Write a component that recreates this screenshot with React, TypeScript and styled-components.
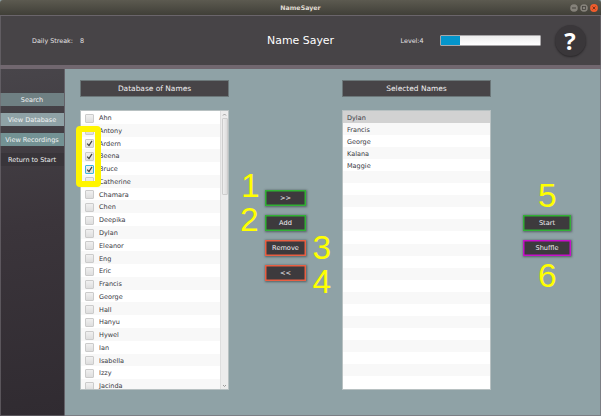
import React from "react";
import styled, { createGlobalStyle, css } from "styled-components";

const Global = createGlobalStyle`
  * { box-sizing: border-box; }
  html, body { margin: 0; padding: 0; overflow: hidden; }
  body { font-family: "DejaVu Sans", Verdana, sans-serif; font-size: 6.5px; background: #8fa2a5; }
`;

const Window = styled.div`
  position: relative;
  width: 601px;
  height: 416px;
  display: flex;
  flex-direction: column;
  background: #8fa2a6;
  overflow: hidden;
`;

const Frame = styled.div`
  position: absolute;
  inset: 15px 0 0 0;
  border: 1px solid rgba(112, 108, 114, 0.65);
  pointer-events: none;
`;

const TitleBar = styled.div`
  flex: none;
  height: 15px;
  display: grid;
  grid-template-columns: 1fr auto 1fr;
  align-items: center;
  background: linear-gradient(#5c5a50, #403f38);
  border-radius: 3px 3px 0 0;
  color: #e0dcd2;
  font-size: 6.3px;
  font-weight: bold;
`;

const WindowControls = styled.div`
  grid-column: 3;
  display: flex;
  justify-content: flex-end;
  gap: 2px;
  padding-right: 3px;
`;

const Header = styled.header`
  flex: none;
  height: 54px;
  display: grid;
  grid-template-columns: 32px 48px 187px 133.5px 39.5px 101px 13.5px 1fr;
  align-items: center;
  border-top: 1px solid #5f5b60;
  border-bottom: 4px solid #71676f;
  background: #474447;
  color: #e4e2e4;
  font-size: 6.4px;
  white-space: nowrap;
`;

const AppName = styled.h1`
  margin: 0;
  font-size: 10.95px;
  font-weight: normal;
  color: #fff;
`;

const Progress = styled.div`
  height: 11px;
  border: 1px solid #a8a6a8;
  border-radius: 1px;
  background: linear-gradient(#ececec, #fff);
`;

const ProgressFill = styled.div`
  width: 19px;
  height: 100%;
  background: #0495cb;
`;

const HelpButton = styled.button`
  width: 31px;
  height: 31px;
  padding: 0;
  border: 0;
  border-radius: 50%;
  background: #3a373a;
  box-shadow: 0 1px 2px rgba(20, 18, 20, 0.6);
  color: #fff;
  font: bold 24px/31px "Open Sans", "Noto Sans", sans-serif;
`;

const Body = styled.div`
  flex: 1;
  display: flex;
  min-height: 0;
`;

const Sidebar = styled.nav`
  width: 65px;
  flex: none;
  display: flex;
  flex-direction: column;
  gap: 7px;
  padding-top: 24px;
  border-right: 1px solid #646168;
  background: linear-gradient(172deg, #48454a, #3b353b 45%, #302b31);
`;

const NavItem = styled.div<{ $bg: string }>`
  height: 13px;
  background: ${(p) => p.$bg};
  color: #f1f3f3;
  text-align: center;
  line-height: 14px;
  white-space: nowrap;
`;

const Main = styled.main`
  flex: 1;
  display: grid;
  grid-template-columns: 149px 113px 149px 112px;
  padding: 11px 0 0 15px;
`;

const Column = styled.section`
  display: flex;
  flex-direction: column;
  gap: 13px;
`;

const ColumnTitle = styled.h2`
  flex: none;
  height: 17px;
  margin: 0;
  border: 1px solid #6c7779;
  background: #474447;
  color: #f2f0f2;
  font-size: 7.45px;
  font-weight: normal;
  line-height: 16px;
  text-align: center;
`;

const List = styled.div`
  height: 280px;
  display: flex;
  border: 1px solid #b8c1c2;
  background: #fff;
`;

const Rows = styled.div`
  flex: 1;
  overflow: hidden;
`;

const Row = styled.div<{ $height: number; $selected?: boolean }>`
  height: ${(p) => p.$height}px;
  display: flex;
  align-items: center;
  gap: 5px;
  padding: 1.5px 0 0 4px;
  color: #38383f;
  &:nth-child(even) { background: #f8f8f8; }
  ${(p) => p.$selected && css`background: #d2d2d2;`}
`;

const Check = styled.span<{ $focus?: boolean }>`
  width: 9px;
  height: 9px;
  flex: none;
  display: flex;
  border: 1px solid ${(p) => (p.$focus ? "#43b5dc" : "#cbcbcb")};
  border-radius: 1px;
  background: linear-gradient(#f0f0f0, #dedede);
  svg { width: 7px; height: 7px; }
`;

const ScrollBar = styled.div`
  width: 8px;
  display: flex;
  flex-direction: column;
  align-items: center;
  justify-content: space-between;
  background: #ececec;
  border-left: 1px solid #dedede;
`;

const Thumb = styled.div`
  width: 6px;
  height: 77px;
  margin-bottom: auto;
  border: 1px solid #cdcdcd;
  border-radius: 1px;
  background: linear-gradient(90deg, #eee, #dcdcdc);
`;

const Arrow = styled.svg`
  width: 5px;
  height: 7px;
  flex: none;
`;

const Actions = styled.div<{ $top: number }>`
  display: flex;
  flex-direction: column;
  align-items: center;
  gap: 9px;
  padding-top: ${(p) => p.$top}px;
`;

const ActionButton = styled.button<{ $color: string; $width: number }>`
  width: ${(p) => p.$width}px;
  height: 16px;
  padding: 0;
  border: 0;
  background: #3d3a3d;
  box-shadow: inset 0 0 0 1.5px ${(p) => p.$color}, 0 0 2px 0.5px rgba(45, 55, 55, 0.6);
  color: #f3f1f3;
  font: 6.6px/16px "DejaVu Sans", sans-serif;
`;

const Marker = styled.span<{ $x: number; $y: number }>`
  position: absolute;
  left: ${(p) => p.$x}px;
  top: ${(p) => p.$y}px;
  color: #ffff00;
  font: 33.5px/34px "Liberation Sans", Arial, sans-serif;
`;

const Highlight = styled.div`
  position: absolute;
  left: 76px;
  top: 126px;
  width: 25px;
  height: 61px;
  border: 6px solid #fff500;
  border-radius: 4px;
`;

const names = [
  "Ahn", "Antony", "Ardern", "Beena", "Bruce", "Catherine", "Chamara", "Chen",
  "Deepika", "Dylan", "Eleanor", "Eng", "Eric", "Francis", "George", "Hall",
  "Hanyu", "Hywel", "Ian", "Isabella", "Izzy", "Jacinda",
];
const checked = ["Ardern", "Beena", "Bruce"];
const selected = ["Dylan", "Francis", "George", "Kalana", "Maggie"];
const selectedRows = Array.from({ length: 23 }, (_, i) => selected[i] ?? "");

const markers = [
  { text: "1", x: 241, y: 169 },
  { text: "2", x: 240, y: 203 },
  { text: "3", x: 312.5, y: 231 },
  { text: "4", x: 312.5, y: 265 },
  { text: "5", x: 538, y: 179 },
  { text: "6", x: 538, y: 259 },
];

const GREEN = "#31b135";
const RED = "#e85f43";
const PURPLE = "#c70fc9";

export default function App() {
  return (
    <>
      <Global />
      <Window>
        <TitleBar>
          <span />
          <span>NameSayer</span>
          <WindowControls>
            <svg width="28" height="8" viewBox="0 0 28 8">
              <circle cx="4" cy="4" r="3.8" fill="#85827a" />
              <path d="M2 4h4" stroke="#45433d" />
              <circle cx="14" cy="4" r="3.8" fill="#85827a" />
              <rect x="12.5" y="2.5" width="3" height="3" fill="none" stroke="#45433d" strokeWidth=".8" />
              <circle cx="24" cy="4" r="3.9" fill="#f15c2c" />
              <path d="m22.6 2.6 2.8 2.8m0-2.8-2.8 2.8" stroke="#6d2d17" strokeWidth=".9" />
            </svg>
          </WindowControls>
        </TitleBar>
        <Header>
          <span />
          <span>Daily Streak:</span>
          <span>8</span>
          <AppName>Name Sayer</AppName>
          <span>Level:4</span>
          <Progress><ProgressFill /></Progress>
          <span />
          <HelpButton>?</HelpButton>
        </Header>
        <Body>
          <Sidebar>
            <NavItem $bg="#6f8083">Search</NavItem>
            <NavItem $bg="#8fa2a6">View Database</NavItem>
            <NavItem $bg="#739294">View Recordings</NavItem>
            <NavItem $bg="#39353a">Return to Start</NavItem>
          </Sidebar>
          <Main>
            <Column>
              <ColumnTitle>Database of Names</ColumnTitle>
              <List>
                <Rows>
                  {names.map((name) => (
                    <Row key={name} $height={12.78}>
                      <Check $focus={name === "Bruce"}>
                        {checked.includes(name) && (
                          <svg viewBox="0 0 7 7">
                            <path d="M1.2 3.7 3 5.6 6 .9" fill="none" stroke="#3f3f3f" strokeWidth="1.2" />
                          </svg>
                        )}
                      </Check>
                      {name}
                    </Row>
                  ))}
                </Rows>
                <ScrollBar>
                  <Arrow viewBox="0 0 5 7"><path d="m1 4.5 1.5-1.5L4 4.5" fill="none" stroke="#999" /></Arrow>
                  <Thumb />
                  <Arrow viewBox="0 0 5 7"><path d="m1 3 1.5 1.5L4 3" fill="none" stroke="#999" /></Arrow>
                </ScrollBar>
              </List>
            </Column>
            <Actions $top={110}>
              <ActionButton $width={41} $color={GREEN}>&gt;&gt;</ActionButton>
              <ActionButton $width={41} $color={GREEN}>Add</ActionButton>
              <ActionButton $width={41} $color={RED}>Remove</ActionButton>
              <ActionButton $width={41} $color={RED}>&lt;&lt;</ActionButton>
            </Actions>
            <Column>
              <ColumnTitle>Selected Names</ColumnTitle>
              <List>
                <Rows>
                  {selectedRows.map((name, i) => (
                    <Row key={i} $height={12.06} $selected={i === 0}>{name}</Row>
                  ))}
                </Rows>
              </List>
            </Column>
            <Actions $top={135}>
              <ActionButton $width={48} $color={GREEN}>Start</ActionButton>
              <ActionButton $width={48} $color={PURPLE}>Shuffle</ActionButton>
            </Actions>
          </Main>
        </Body>
        <Frame />
        <Highlight />
        {markers.map((m) => (
          <Marker key={m.text} $x={m.x} $y={m.y}>{m.text}</Marker>
        ))}
      </Window>
    </>
  );
}
